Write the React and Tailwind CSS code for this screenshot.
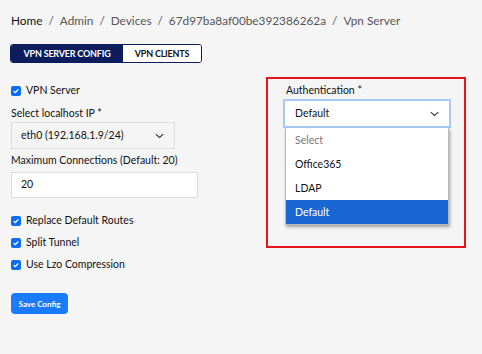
import React from 'react';

const Check = ({ label }) => (
  <div className="flex items-center gap-[5px] h-[22px]">
    <span className="w-[10px] h-[10px] rounded-[2px] bg-[#0b6ef0] flex items-center justify-center">
      <svg viewBox="0 0 12 12" className="w-[8px] h-[8px]">
        <path d="M2.5 6.2 L5 8.5 L9.5 3.5" fill="none" stroke="white" strokeWidth="2" />
      </svg>
    </span>
    <span className="text-[10.5px] text-[#111]">{label}</span>
  </div>
);

const Chevron = () => (
  <svg viewBox="0 0 12 8" className="w-[9px] h-[6px]">
    <path d="M1 1.5 L6 6 L11 1.5" fill="none" stroke="#333" strokeWidth="1.4" />
  </svg>
);

export default function App() {
  return (
    <div className="w-[482px] h-[354px] bg-[#f5f5f5] font-['Lato',sans-serif] px-[11px] pt-[11px] overflow-hidden">
      {/* Breadcrumb */}
      <div className="text-[11.8px] text-[#555] flex gap-[6px] h-[20px] items-center">
        <span className="text-[#111]">Home</span>
        <span>/</span>
        <span>Admin</span>
        <span>/</span>
        <span>Devices</span>
        <span>/</span>
        <span>67d97ba8af00be392386262a</span>
        <span>/</span>
        <span>Vpn Server</span>
      </div>

      {/* Tabs */}
      <div className="mt-[13px] flex w-[192px] h-[19px] border border-[#0c1c5c] rounded-[3px] overflow-hidden text-[9px] font-bold -ml-[1px]">
        <div className="w-[112px] bg-[#0c1c5c] text-white flex items-center justify-center tracking-[-0.2px]">VPN SERVER CONFIG</div>
        <div className="flex-1 bg-white text-[#111] flex items-center justify-center tracking-[-0.2px]">VPN CLIENTS</div>
      </div>

      <div className="flex mt-[17px]">
        {/* Left column */}
        <div className="w-[255px]">
          <Check label="VPN Server" />
          <div className="text-[10.5px] text-[#111] mt-[4px] h-[14px] leading-[14px]">Select localhost IP *</div>
          <div className="mt-[2px] w-[164px] h-[27px] bg-[#f5f5f5] border border-[#ddd] flex items-center justify-between pl-[9px] pr-[10px] text-[10.5px] text-[#111]">
            <span>eth0 (192.168.1.9/24)</span>
            <Chevron />
          </div>
          <div className="text-[10.5px] text-[#111] mt-[3px] h-[16px] leading-[16px]">Maximum Connections (Default: 20)</div>
          <div className="mt-[4px] w-[187px] h-[26px] bg-white border border-[#ddd] flex items-center pl-[9px] text-[10.5px] text-[#111]">20</div>
          <div className="mt-[12px]">
            <Check label="Replace Default Routes" />
            <Check label="Split Tunnel" />
            <Check label="Use Lzo Compression" />
          </div>
          <button className="mt-[17px] w-[57px] h-[21px] rounded-[4px] bg-[#1a7bff] text-white text-[8px] font-bold flex items-center justify-center">
            Save Config
          </button>
        </div>

        {/* Right column */}
        <div className="-mt-[3px] w-[200px] h-[171px] border-2 border-[#e8141c] pt-[4px] pl-[18px]">
          <div className="text-[10.5px] text-[#111] h-[14px] leading-[14px]">Authentication *</div>
          <div className="relative mt-[2px] -ml-[3px] w-[168px]">
            <div className="h-[29px] bg-white border-2 border-[#a8c8f8] flex items-center justify-between pl-[10px] pr-[10px] text-[10.5px] text-[#111]">
              <span>Default</span>
              <Chevron />
            </div>
            <div className="absolute left-[2px] top-[29px] w-[164px] bg-white shadow-[1px_2px_3px_rgba(0,0,0,0.35)] border-x border-b border-[#bbb] text-[10.5px]">
              <div className="h-[24px] flex items-center pt-[2px] pl-[9px] text-[#777]">Select</div>
              <div className="h-[24px] flex items-center pt-[2px] pl-[9px] text-[#111]">Office365</div>
              <div className="h-[24px] flex items-center pt-[2px] pl-[9px] text-[#111]">LDAP</div>
              <div className="h-[24px] flex items-center pt-[1px] pl-[9px] text-white bg-[#1a66d2]">Default</div>
            </div>
          </div>
        </div>
      </div>
    </div>
  );
}
